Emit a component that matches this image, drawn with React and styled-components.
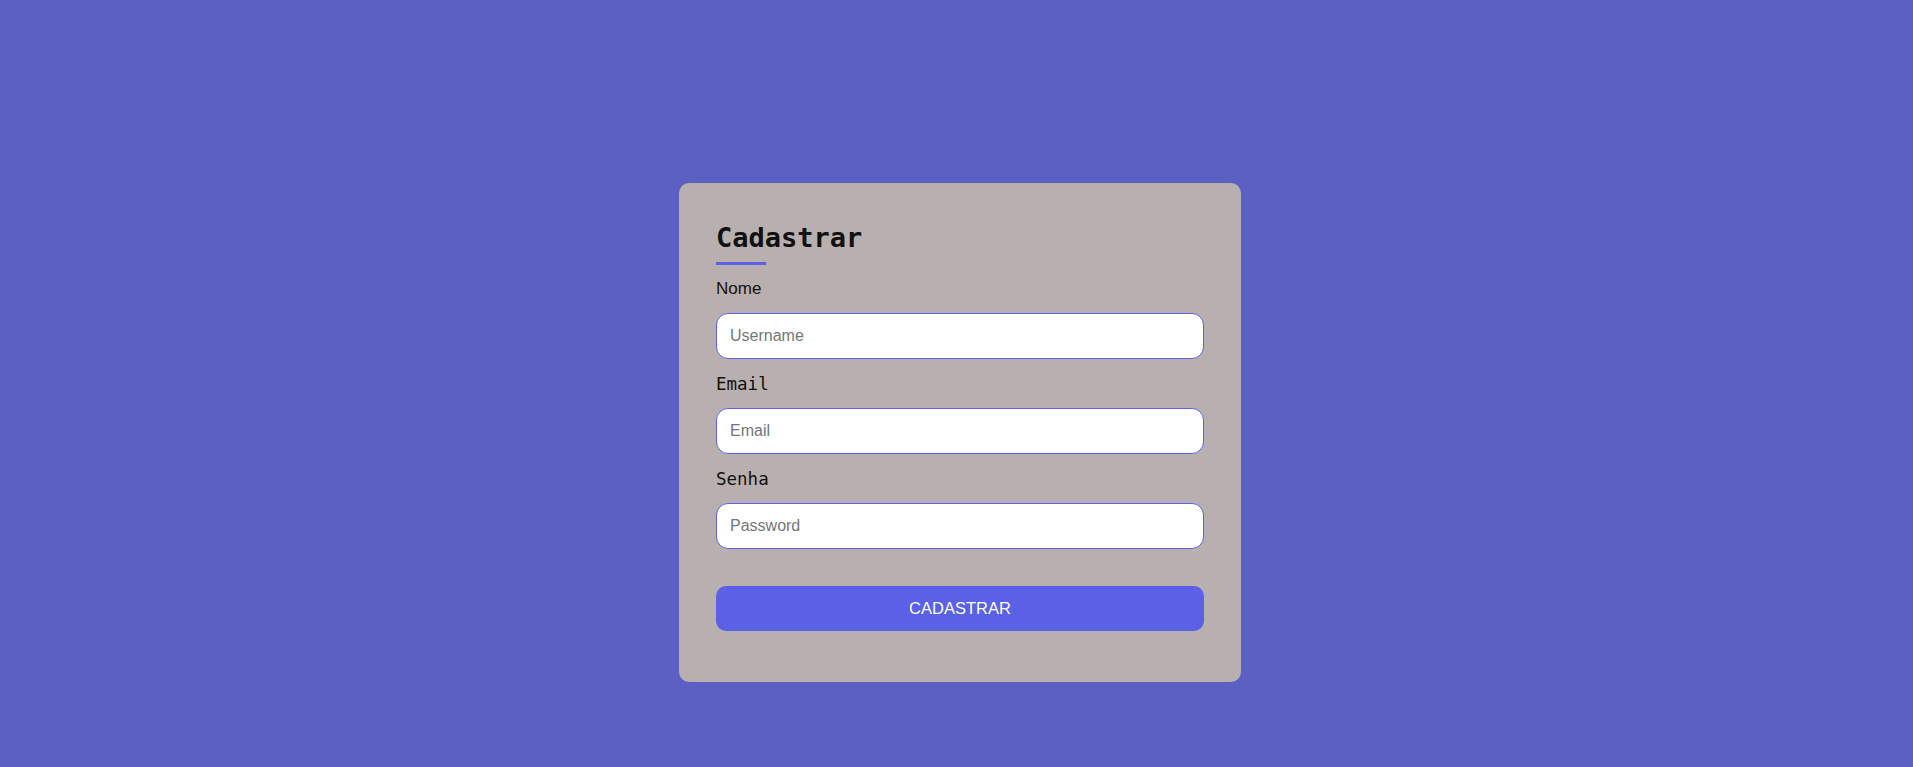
import React from "react";
import styled, { createGlobalStyle } from "styled-components";

const GlobalStyle = createGlobalStyle`
  html, body {
    margin: 0;
    padding: 0;
    background: #5c60c2;
  }
  * {
    box-sizing: border-box;
  }
`;

const Page = styled.main`
  min-height: 100vh;
  display: flex;
  justify-content: center;
  align-items: flex-start;
  padding: 183px 0 0 7px;
`;

const Card = styled.form`
  width: 562px;
  padding: 39px 37px 51px;
  background: #b8b0ae;
  border-radius: 10px;
  display: flex;
  flex-direction: column;
`;

const Title = styled.h2`
  margin: 0;
  font-family: "DejaVu Sans Mono", "Liberation Mono", monospace;
  font-size: 27px;
  font-weight: 700;
  line-height: normal;
  color: #111;
`;

const Underline = styled.span`
  display: block;
  width: 50px;
  height: 3px;
  margin: 9px 0 14px;
  background: #5a61e6;
`;

const Label = styled.label`
  display: block;
  margin-bottom: 14px;
  font-family: ${(p) =>
    p.$sans
      ? `"Liberation Sans", Arial, sans-serif`
      : `"DejaVu Sans Mono", "Liberation Mono", monospace`};
  font-size: ${(p) => (p.$sans ? "17px" : "17.5px")};
  line-height: normal;
  color: #111;
`;

const Input = styled.input`
  display: block;
  width: 100%;
  height: 46px;
  margin: 0 0 15px;
  padding: 0 13px;
  border: 1px solid #5a61e6;
  border-radius: 12px;
  background: #fff;
  font-family: "Liberation Sans", Arial, sans-serif;
  font-size: 16px;
  color: #222;
  outline: none;

  &::placeholder {
    color: #767676;
  }
`;

const Button = styled.button`
  margin-top: 22px;
  width: 100%;
  height: 45px;
  border: none;
  border-radius: 10px;
  background: #5a61e7;
  color: #fff;
  font-family: "Liberation Sans", Arial, sans-serif;
  font-size: 16.5px;
  cursor: pointer;
`;

const App = () => {
  return (
    <>
      <GlobalStyle />
      <Page>
        <Card onSubmit={(e) => e.preventDefault()}>
          <Title>Cadastrar</Title>
          <Underline />
          <Label $sans htmlFor="nome">Nome</Label>
          <Input id="nome" type="text" placeholder="Username" />
          <Label htmlFor="email">Email</Label>
          <Input id="email" type="email" placeholder="Email" />
          <Label htmlFor="senha">Senha</Label>
          <Input id="senha" type="password" placeholder="Password" />
          <Button type="submit">CADASTRAR</Button>
        </Card>
      </Page>
    </>
  );
};

export default App;
